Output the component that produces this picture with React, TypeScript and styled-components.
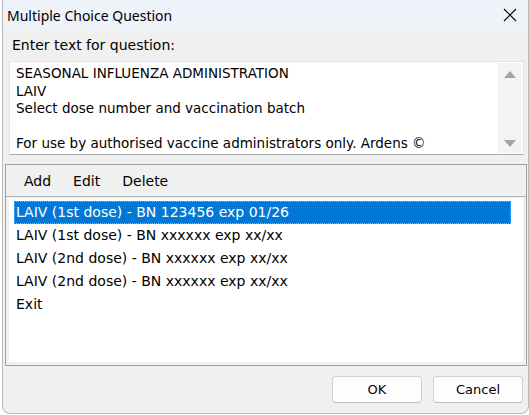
import React from "react";
import styled, { createGlobalStyle } from "styled-components";

const Global = createGlobalStyle`
  html, body { margin: 0; padding: 0; background: #ffffff; }
  body { width: 529px; height: 415px; overflow: hidden; }
  * { box-sizing: border-box; }
`;

const Window = styled.div`
  margin-left: 2px;
  width: 527px;
  height: 414px;
  border: 1px solid #b9b9b9;
  border-top: none;
  border-radius: 0 0 8px 8px;
  background: #f0f0f0;
  display: flex;
  flex-direction: column;
  overflow: hidden;
`;

const TitleBar = styled.div`
  height: 30px;
  background: #eef2f9;
  display: flex;
  align-items: center;
  justify-content: space-between;
  padding-left: 4px;
  font-family: "Noto Sans", "Open Sans", sans-serif;
  font-size: 14px;
  color: #000;
`;

const CloseBtn = styled.div`
  width: 30px;
  height: 30px;
  display: flex;
  align-items: center;
  justify-content: center;
  margin-right: 3px;
`;

const Body = styled.div`
  flex: 1;
  display: flex;
  flex-direction: column;
  padding: 7px 1px 0 0;
  font-family: Tahoma, "DejaVu Sans", sans-serif;
  font-size: 14px;
  color: #000;
`;

const Label = styled.div`
  padding-left: 9px;
  height: 24px;
`;

const Memo = styled.div`
  margin: 0 3px 0 6px;
  height: 94px;
  background: #fff;
  border: 1px solid #e3e3e3;
  border-bottom-color: #a9a9a9;
  display: flex;
`;

const MemoText = styled.div`
  flex: 1;
  padding: 3px 0 0 6px;
  font-size: 13.5px;
  line-height: 17.5px;
  white-space: pre;
`;

const ScrollBar = styled.div`
  width: 23px;
  margin: 1px 2px 1px 0;
  background: #f3f3f3;
  display: flex;
  flex-direction: column;
  justify-content: space-between;
  align-items: center;
  padding: 8px 0 6px;
`;

const Arrow = styled.div<{ $down?: boolean }>`
  width: 0;
  height: 0;
  border-left: 6px solid transparent;
  border-right: 6px solid transparent;
  ${(p) =>
    p.$down
      ? "border-top: 7px solid #a3a3a3;"
      : "border-bottom: 7px solid #a3a3a3;"}
`;

const ListPanel = styled.div`
  margin-top: 9px;
  margin-left: 2px;
  height: 202px;
  border: 1px solid #a0a0a0;
  display: flex;
  flex-direction: column;
`;

const Toolbar = styled.div`
  height: 32px;
  background: #f0f0f0;
  border-bottom: 1px solid #b4b4b4;
  display: flex;
  align-items: center;
  padding-left: 7px;
`;

const ToolButton = styled.div`
  padding: 0 11px;
`;

const ListArea = styled.div`
  flex: 1;
  background: #fff;
  margin: 1px 3px 3px 3px;
  padding: 3px 12px 0 5px;
  display: flex;
  flex-direction: column;
`;

const Item = styled.div<{ $selected?: boolean }>`
  height: 23px;
  line-height: 21px;
  padding-left: 1px;
  white-space: nowrap;
  border: 1px dotted ${(p) => (p.$selected ? "#e8a33d" : "transparent")};
  background: ${(p) => (p.$selected ? "#0078d7" : "transparent")};
  color: ${(p) => (p.$selected ? "#fff" : "#000")};
`;

const ButtonRow = styled.div`
  display: flex;
  justify-content: flex-end;
  gap: 11px;
  padding: 10px 4px 0 0;
`;

const Button = styled.div`
  width: 90px;
  height: 27px;
  background: #fdfdfd;
  border: 1px solid #d0d0d0;
  border-bottom-color: #bdbdbd;
  border-radius: 4px;
  display: flex;
  align-items: center;
  justify-content: center;
  font-family: Tahoma, "DejaVu Sans", sans-serif;
  font-size: 13px;
`;

const memo = `SEASONAL INFLUENZA ADMINISTRATION
LAIV
Select dose number and vaccination batch

For use by authorised vaccine administrators only. Ardens ©`;

const items = [
  "LAIV (1st dose) - BN 123456 exp 01/26",
  "LAIV (1st dose) - BN xxxxxx exp xx/xx",
  "LAIV (2nd dose) - BN xxxxxx exp xx/xx",
  "LAIV (2nd dose) - BN xxxxxx exp xx/xx",
  "Exit",
];

export default function App() {
  return (
    <>
      <Global />
      <Window>
        <TitleBar>
          <span>Multiple Choice Question</span>
          <CloseBtn>
            <svg width="14" height="14" viewBox="0 0 14 14">
              <path d="M1 1 L13 13 M13 1 L1 13" stroke="#000" strokeWidth="1.1" />
            </svg>
          </CloseBtn>
        </TitleBar>
        <Body>
          <Label>Enter text for question:</Label>
          <Memo>
            <MemoText>{memo}</MemoText>
            <ScrollBar>
              <Arrow />
              <Arrow $down />
            </ScrollBar>
          </Memo>
          <ListPanel>
            <Toolbar>
              <ToolButton>Add</ToolButton>
              <ToolButton>Edit</ToolButton>
              <ToolButton>Delete</ToolButton>
            </Toolbar>
            <ListArea>
              {items.map((t, i) => (
                <Item key={i} $selected={i === 0}>
                  {t}
                </Item>
              ))}
            </ListArea>
          </ListPanel>
          <ButtonRow>
            <Button>OK</Button>
            <Button>Cancel</Button>
          </ButtonRow>
        </Body>
      </Window>
    </>
  );
}
